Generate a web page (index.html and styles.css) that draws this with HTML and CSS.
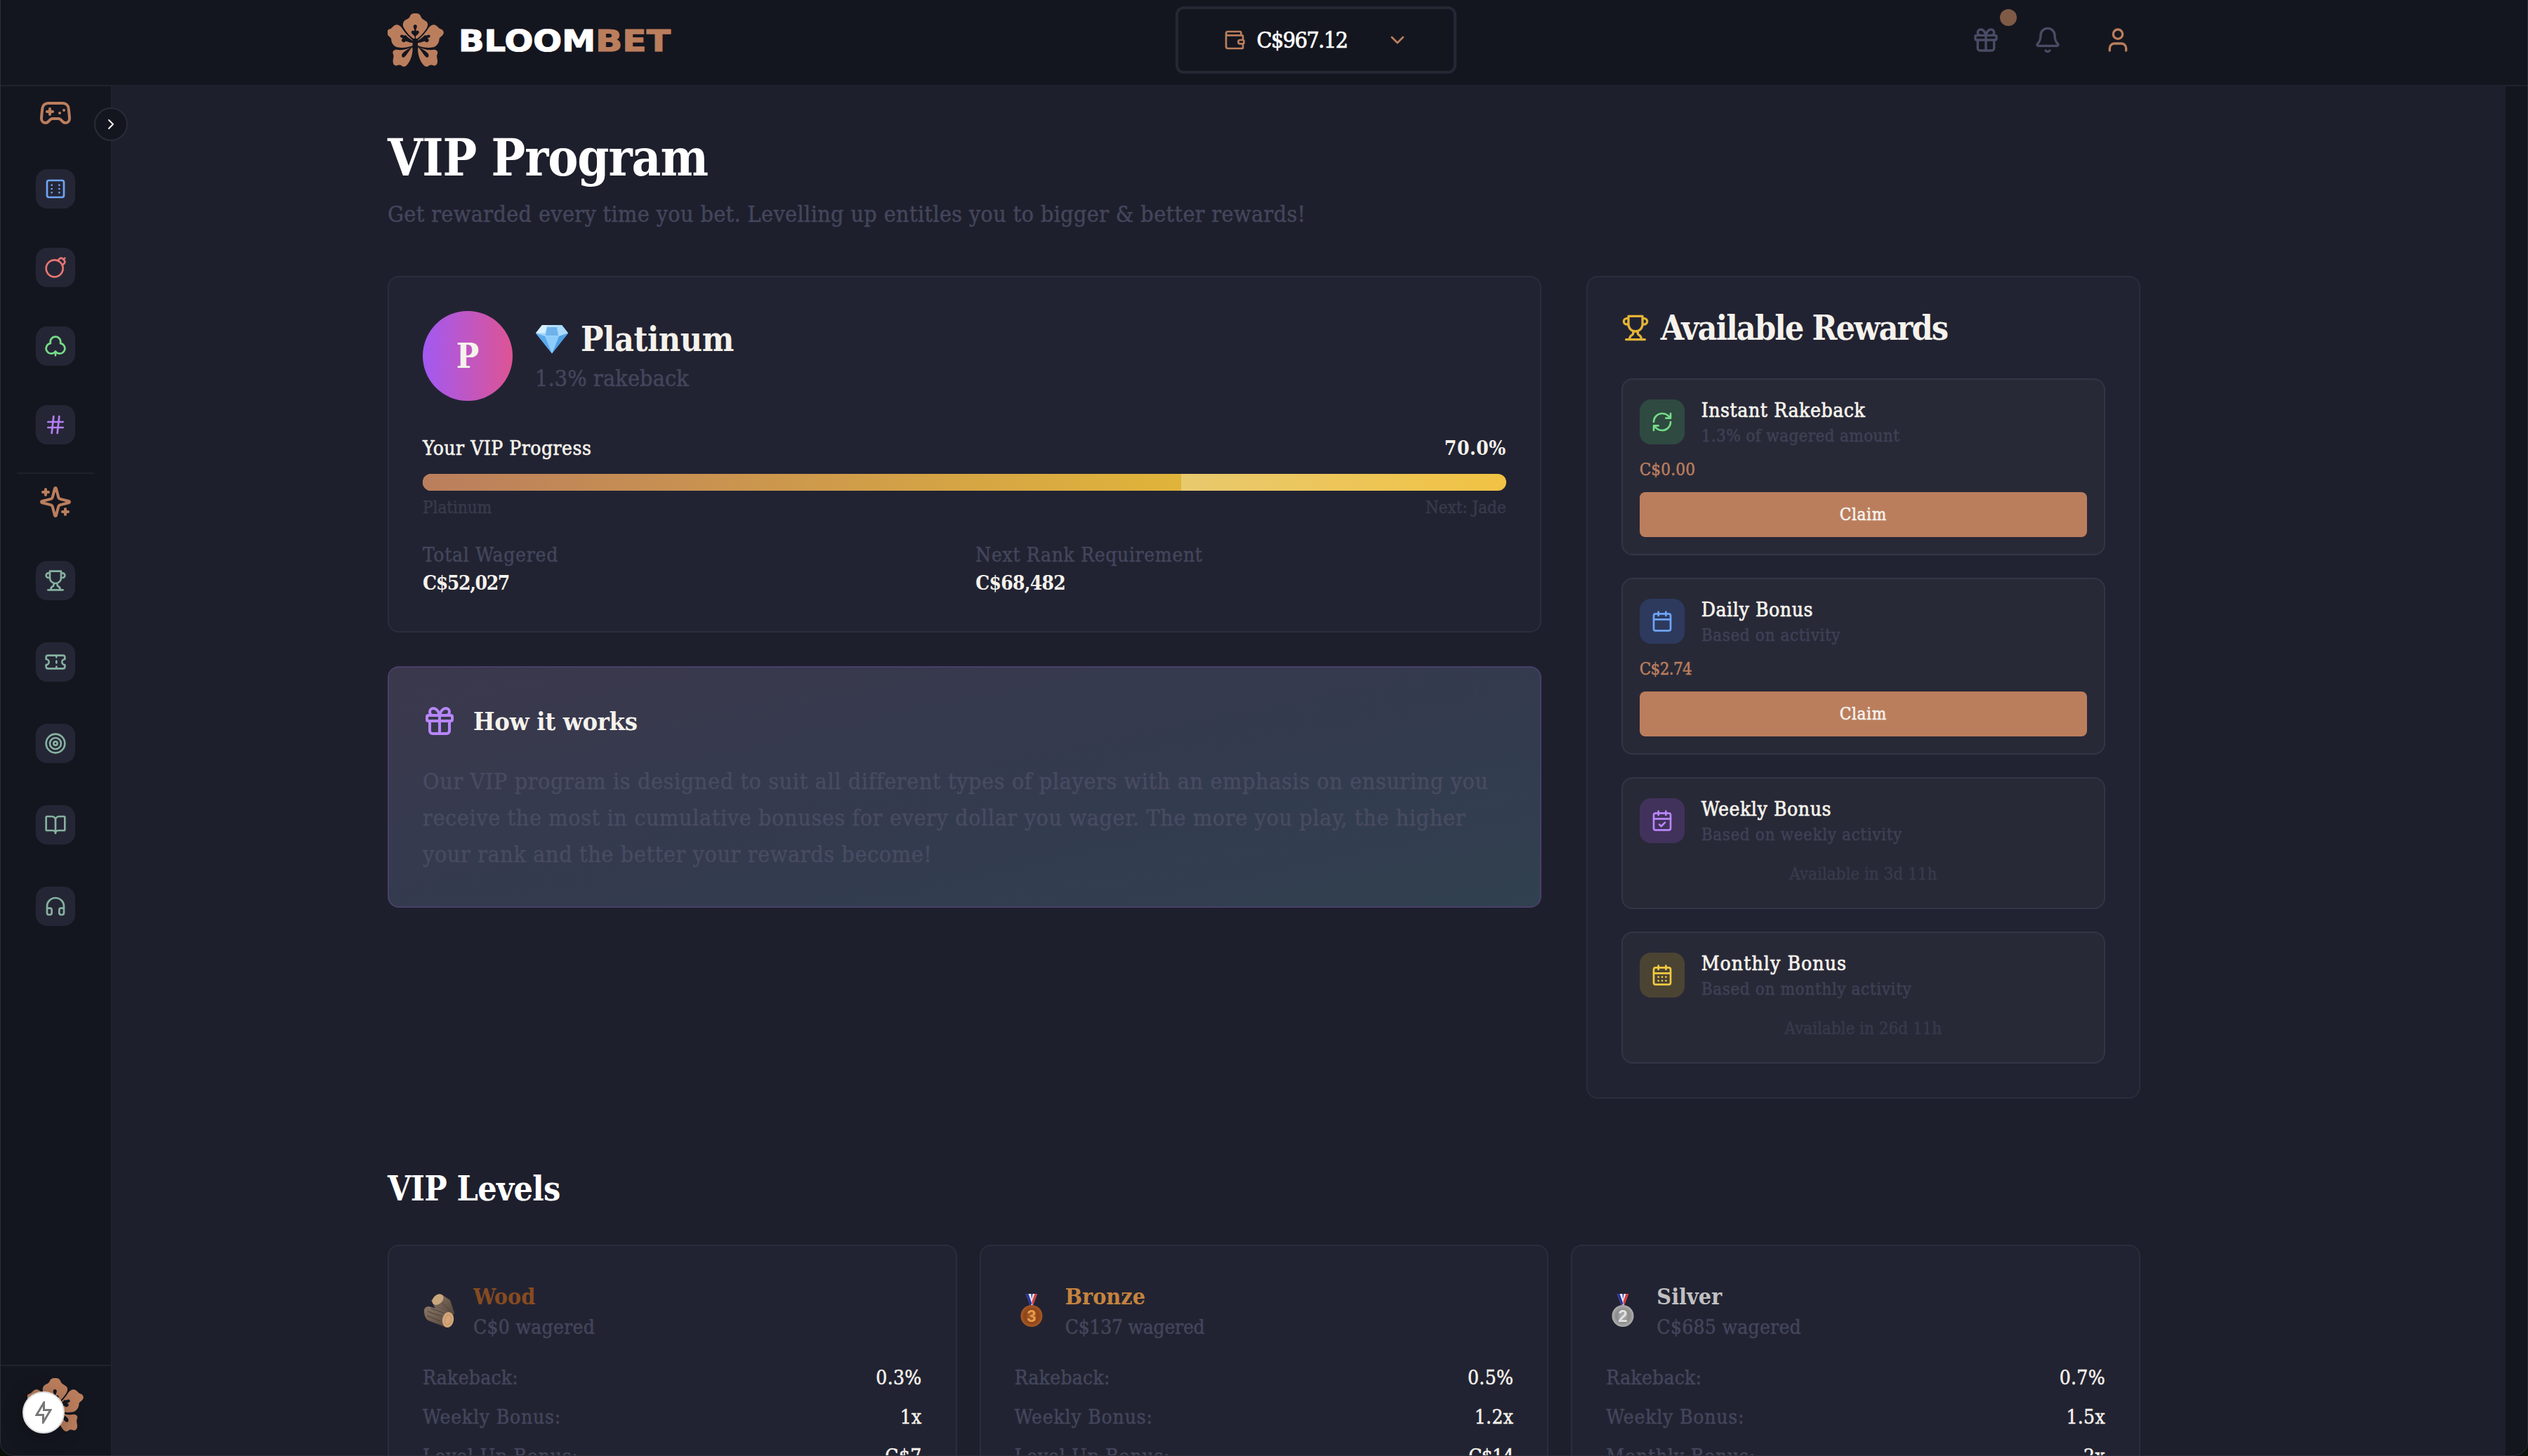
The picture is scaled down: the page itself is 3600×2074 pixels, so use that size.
FILE: index.html
```html
<!DOCTYPE html>
<html lang="en">
<head>
<meta charset="utf-8">
<title>BloomBet – VIP Program</title>
<link rel="stylesheet" href="styles.css">
</head>
<body>
<svg class="sprite" width="0" height="0" aria-hidden="true">
  <defs>
    <linearGradient id="gem" x1="0" y1="0" x2="0" y2="1"><stop offset="0" stop-color="#b9e4ff"/><stop offset="1" stop-color="#6db8f5"/></linearGradient>
    <linearGradient id="bark" x1="0" y1="0" x2="1" y2="1"><stop offset="0" stop-color="#8a7766"/><stop offset="1" stop-color="#50433a"/></linearGradient>
    <radialGradient id="bronze"><stop offset="0" stop-color="#b5652a"/><stop offset="0.6" stop-color="#8c4418"/><stop offset="1" stop-color="#a85a26"/></radialGradient>
    <radialGradient id="silver"><stop offset="0" stop-color="#b5b5b5"/><stop offset="0.6" stop-color="#8b8b8b"/><stop offset="1" stop-color="#b0b0b0"/></radialGradient>
    <symbol id="flower" viewBox="0 0 80 77">
      <path fill="#bb7e5d" d="M37 36C32 33 26 26 23 20.500C21 17 21.500 13 24 10.500C27 8 30 8 31.500 5C33 1 35 0 39.500 0C44 0 46 1 47.500 5C49 8.500 52 9 55 11.500C58 14 57.500 17 56 20.500C52 27 47 33 42 36Z"/>
      <g id="side">
        <path fill="#bb7e5d" d="M43 38C48 34 54 27.500 58.500 20.500C61.500 16.500 66 14.500 70 18C72.500 20 73 21.500 76 22.500C79 23.500 80.500 27 79.500 29C78 33 74 33.500 73.500 36.500C73.500 41 71 45.500 67 47.500C61 50 51 49 43 46Z"/>
        <path fill="#bb7e5d" d="M43.500 48C51 51.500 59 53 66 51.800C69.500 51.800 72 54 71 57.500C69 61 71 64 71 68C71 72 69.500 74.500 66 74.500C63 73.500 61 73 59.500 74C57 76.500 54 76.500 51.500 74C46 68 43.500 60 43 52Z"/>
        <path fill="#14161f" d="M40 40.500C46 37.500 49.500 34.500 52.500 31.500C54 30.500 55 32.500 56.500 31C59 29.500 61.500 31.500 60.500 33.500C59 35.500 57 34.500 57 36C59 37 59.500 38.500 57.500 40.500C56 42 53.500 41 53 39.500C49 41 45 42 40 42.500ZM42 47C47 49.500 55 53.500 58 58C59.500 61.500 57.500 63.500 55 62.500C51 60 49 53 42 47Z"/>
      </g>
      <use href="#side" transform="matrix(-1 0 0 1 78.600 0)"/>
      <path fill="#14161f" d="M38.600 44V33C37 30 33.800 29.500 33.800 27C33.800 24.500 36.500 23.800 38 25.500C38.500 22 36.700 21.500 36.700 18.500C36.700 15 41.800 15 41.800 18.500C41.800 21.500 40 22 40.500 25.500C42 23.800 44.700 24.500 44.700 27C44.700 29.500 41.500 30 40 33V44Z"/>
      <path fill="#14161f" d="M36.500 38H42.200L43 77H35.500Z"/>
      <path stroke="#14161f" stroke-width="1.200" fill="none" d="M39.300 39C46 35 53 28 58 19M39.300 39C32.600 35 25.600 28 20.600 19"/>
    </symbol>
    <symbol id="gift" viewBox="0 0 24 24"><rect x="3" y="8" width="18" height="4" rx="1"/><path d="M12 8v13M19 12v7a2 2 0 0 1-2 2H7a2 2 0 0 1-2-2v-7M7.500 8a2.500 2.500 0 0 1 0-5A4.800 8 0 0 1 12 8a4.800 8 0 0 1 4.500-5 2.500 2.500 0 0 1 0 5"/></symbol>
    <symbol id="trophy" viewBox="0 0 24 24"><path d="M6 9H4.500a2.500 2.500 0 0 1 0-5H6M18 9h1.500a2.500 2.500 0 0 0 0-5H18M4 22h16M10 14.660V17c0 .55-.47.98-.97 1.210C7.850 18.750 7 20.240 7 22M14 14.660V17c0 .55.47.98.97 1.210C16.150 18.750 17 20.240 17 22M18 2H6v7a6 6 0 0 0 12 0V2Z"/></symbol>
    <symbol id="medal" viewBox="0 0 48 48">
      <path fill="#e8e8f5" d="M16 0h16l-6 16h-4z"/><path fill="#2330a0" d="M16 0h3.500l5 14-1.500 2h-1z"/><path fill="#d83a3a" d="M32 0h-3.500l-4 11 .8 5h.7z"/><path fill="#2330a0" d="M23.500 0h2l-1.500 8z"/>
    </symbol>
  </defs>
</svg>

<div class="app">
  <header class="topbar">
    <div class="topbar-inner">
      <a class="brand">
        <svg width="80" height="77"><use href="#flower"/></svg>
        <svg class="wordmark" width="300" height="32" viewBox="0 0 300 32"><text x="-3" y="31.500" textLength="195" lengthAdjust="spacingAndGlyphs" fill="#fff" stroke="#fff">BLOOM</text><text x="192" y="31.500" textLength="107" lengthAdjust="spacingAndGlyphs" fill="#bb7e5d" stroke="#bb7e5d">BET</text></svg>
      </a>
      <button class="wallet">
        <svg class="ico" width="32" height="32" viewBox="0 0 24 24"><path d="M19 7V4a1 1 0 0 0-1-1H5a2 2 0 0 0 0 4h15a1 1 0 0 1 1 1v4h-3a2 2 0 0 0 0 4h3a1 1 0 0 0 1-1v-2a1 1 0 0 0-1-1M3 5v14a2 2 0 0 0 2 2h15a1 1 0 0 0 1-1v-4"/></svg>
        <span>C$967.12</span>
        <svg class="ico chev" width="32" height="32" viewBox="0 0 24 24"><path d="m6 9 6 6 6-6"/></svg>
      </button>
      <nav class="actions">
        <span class="gift-link"><svg class="ico" width="40" height="40"><use href="#gift"/></svg><i class="dot"></i></span>
        <svg class="ico" width="40" height="40" viewBox="0 0 24 24"><path d="M10.270 21a2 2 0 0 0 3.460 0M3.260 15.330A1 1 0 0 0 4 17h16a1 1 0 0 0 .74-1.670C19.410 13.960 18 12.500 18 8A6 6 0 0 0 6 8c0 4.500-1.410 5.960-2.740 7.330"/></svg>
        <svg class="ico user" width="40" height="40" viewBox="0 0 24 24"><path d="M19 21v-2a4 4 0 0 0-4-4H9a4 4 0 0 0-4 4v2"/><circle cx="12" cy="7" r="4"/></svg>
      </nav>
    </div>
  </header>

  <div class="shell">
    <aside class="sidebar">
      <div class="group games">
        <svg class="ico accent" width="48" height="48" viewBox="0 0 24 24"><path d="M6 11h4M8 9v4M15 12h.01M18 10h.01M17.320 5H6.680a4 4 0 0 0-3.978 3.590C2.604 9.416 2 14.456 2 16a3 3 0 0 0 3 3c1 0 1.500-.5 2-1l1.414-1.414A2 2 0 0 1 9.828 16h4.344a2 2 0 0 1 1.414.586L17 18c.5.5 1 1 2 1a3 3 0 0 0 3-3c0-1.545-.604-6.584-.685-7.258A4 4 0 0 0 17.320 5z"/></svg>
        <span class="tile blue"><svg class="ico" width="32" height="32" viewBox="0 0 24 24"><rect x="3" y="3" width="18" height="18" rx="2"/><path d="M16 8h.01M16 12h.01M16 16h.01M8 8h.01M8 12h.01M8 16h.01"/></svg></span>
        <span class="tile red"><svg class="ico" width="32" height="32" viewBox="0 0 24 24"><circle cx="11" cy="13" r="9"/><path d="M14.350 4.650 16.300 2.700a2.410 2.410 0 0 1 3.400 0l1.600 1.600a2.400 2.400 0 0 1 0 3.400l-1.950 1.950M22 2l-1.500 1.500"/></svg></span>
        <span class="tile green"><svg class="ico" width="32" height="32" viewBox="0 0 24 24"><path d="M17.280 9.050a5.500 5.500 0 1 0-10.560 0A5.500 5.500 0 1 0 12 17.660a5.500 5.500 0 1 0 5.280-8.600ZM12 17.660V22"/></svg></span>
        <span class="tile purple"><svg class="ico" width="32" height="32" viewBox="0 0 24 24"><path d="M4 9h16M4 15h16M10 3 8 21M16 3l-2 18"/></svg></span>
      </div>
      <hr>
      <div class="group more">
        <svg class="ico accent" width="48" height="48" viewBox="0 0 24 24"><path d="M9.937 15.500A2 2 0 0 0 8.500 14.063l-6.135-1.582a.5.5 0 0 1 0-.962L8.500 9.936A2 2 0 0 0 9.937 8.500l1.582-6.135a.5.5 0 0 1 .963 0L14.063 8.500A2 2 0 0 0 15.500 9.937l6.135 1.581a.5.5 0 0 1 0 .964L15.500 14.063a2 2 0 0 0-1.437 1.437l-1.582 6.135a.5.5 0 0 1-.963 0zM19 17v4M21 19h-4M5 3v4M7 5H3"/></svg>
        <span class="tile"><svg class="ico" width="32" height="32"><use href="#trophy"/></svg></span>
        <span class="tile"><svg class="ico" width="32" height="32" viewBox="0 0 24 24"><path d="M2 9a3 3 0 0 1 0 6v2a2 2 0 0 0 2 2h16a2 2 0 0 0 2-2v-2a3 3 0 0 1 0-6V7a2 2 0 0 0-2-2H4a2 2 0 0 0-2 2ZM13 5v2M13 17v2M13 11v2"/></svg></span>
        <span class="tile"><svg class="ico" width="32" height="32" viewBox="0 0 24 24"><circle cx="12" cy="12" r="10"/><circle cx="12" cy="12" r="6"/><circle cx="12" cy="12" r="2"/></svg></span>
        <span class="tile"><svg class="ico" width="32" height="32" viewBox="0 0 24 24"><path d="M12 7v14M3 18a1 1 0 0 1-1-1V4a1 1 0 0 1 1-1h5a4 4 0 0 1 4 4 4 4 0 0 1 4-4h5a1 1 0 0 1 1 1v13a1 1 0 0 1-1 1h-6a3 3 0 0 0-3 3 3 3 0 0 0-3-3z"/></svg></span>
        <span class="tile"><svg class="ico" width="32" height="32" viewBox="0 0 24 24"><path d="M3 14h3a2 2 0 0 1 2 2v3a2 2 0 0 1-2 2H5a2 2 0 0 1-2-2v-7a9 9 0 0 1 18 0v7a2 2 0 0 1-2 2h-1a2 2 0 0 1-2-2v-3a2 2 0 0 1 2-2h3"/></svg></span>
      </div>
      <div class="side-foot">
        <svg width="80" height="77"><use href="#flower"/></svg>
        <button class="bolt"><svg width="24" height="32" viewBox="0 0 24 32" fill="none" stroke="#777" stroke-width="3"><path d="M12.500 2 2 19.500h9.500V30L22 12.500h-9.500Z"/></svg></button>
      </div>
      <button class="toggle"><svg class="ico" width="24" height="24" viewBox="0 0 24 24"><path d="m9 6 6 6-6 6"/></svg></button>
    </aside>

    <main class="content">
      <h1>VIP Program</h1>
      <p class="lead">Get rewarded every time you bet. Levelling up entitles you to bigger &amp; better rewards!</p>

      <div class="overview">
        <div class="left">
          <section class="card status">
            <div class="rank">
              <div class="avatar">P</div>
              <div>
                <h2 class="rank-name"><svg width="48" height="42" viewBox="0 0 48 42"><path fill="url(#gem)" d="M10 1h28l9 11.500L24 41.500 1 12.500Z"/><path fill="#d6f0ff" d="M10 1h7l-3 11.500H1Z"/><path fill="#6fb2ea" d="M17 4h14l2 12H15Z"/><path fill="#a9dbfc" d="M31 1h7l9 11.500-13 4Z"/><path fill="#4f9fe6" d="M34 17 47 12.500 24 41.500Z"/><path fill="#8dcdfb" d="M14 17h20L24 41.500Z"/><path fill="#5aa9ee" d="m1 12.500 13 4.500 10 24.500Z"/></svg>Platinum</h2>
                <p class="rank-rate">1.3% rakeback</p>
              </div>
            </div>
            <div class="progress-head"><span>Your VIP Progress</span><b>70.0%</b></div>
            <div class="bar"><div class="fill" style="width:70%"></div></div>
            <div class="progress-foot"><span>Platinum</span><span>Next: Jade</span></div>
            <div class="stats">
              <div><p>Total Wagered</p><b>C$52,027</b></div>
              <div><p class="req">Next Rank Requirement</p><b class="req-value">C$68,482</b></div>
            </div>
          </section>
          <section class="card how">
            <h3><svg class="ico" width="48" height="48"><use href="#gift"/></svg>How it works</h3>
            <p>Our VIP program is designed to suit all different types of players with an emphasis on ensuring you<br>receive the most in cumulative bonuses for every dollar you wager. The more you play, the higher<br>your rank and the better your rewards become!</p>
          </section>
        </div>

        <section class="card rewards">
          <h2><svg class="ico" width="40" height="40"><use href="#trophy"/></svg>Available Rewards</h2>
          <article class="reward">
            <div class="reward-head"><span class="badge b-green"><svg class="ico" width="32" height="32" viewBox="0 0 24 24"><path d="M3 12a9 9 0 0 1 9-9 9.750 9.750 0 0 1 6.740 2.740L21 8M21 3v5h-5M21 12a9 9 0 0 1-9 9 9.750 9.750 0 0 1-6.740-2.740L3 16M8 16H3v5"/></svg></span><div><h4>Instant Rakeback</h4><p>1.3% of wagered amount</p></div></div>
            <div class="amount">C$0.00</div>
            <button class="claim">Claim</button>
          </article>
          <article class="reward">
            <div class="reward-head"><span class="badge b-blue"><svg class="ico" width="32" height="32" viewBox="0 0 24 24"><path d="M8 2v4M16 2v4M3 10h18"/><rect x="3" y="4" width="18" height="18" rx="2"/></svg></span><div><h4>Daily Bonus</h4><p class="basis">Based on activity</p></div></div>
            <div class="amount tight">C$2.74</div>
            <button class="claim">Claim</button>
          </article>
          <article class="reward">
            <div class="reward-head"><span class="badge b-purple"><svg class="ico" width="32" height="32" viewBox="0 0 24 24"><path d="M8 2v4M16 2v4M3 10h18m-12 6 2 2 4-4"/><rect x="3" y="4" width="18" height="18" rx="2"/></svg></span><div><h4>Weekly Bonus</h4><p class="basis">Based on weekly activity</p></div></div>
            <div class="wait">Available in 3d 11h</div>
          </article>
          <article class="reward">
            <div class="reward-head"><span class="badge b-yellow"><svg class="ico" width="32" height="32" viewBox="0 0 24 24"><path d="M8 2v4M16 2v4M3 10h18M8 14h.01M12 14h.01M16 14h.01M8 18h.01M12 18h.01M16 18h.01"/><rect x="3" y="4" width="18" height="18" rx="2"/></svg></span><div><h4 class="wide">Monthly Bonus</h4><p class="basis">Based on monthly activity</p></div></div>
            <div class="wait">Available in 26d 11h</div>
          </article>
        </section>
      </div>

      <h2 class="levels-title">VIP Levels</h2>
      <div class="levels">
        <section class="card level">
          <div class="level-head">
            <svg width="48" height="48" viewBox="0 0 48 48"><path fill="url(#bark)" d="M12 9 27 1 39 9l6 18-3 6-24-12Z"/><ellipse cx="21.500" cy="8" rx="6.500" ry="9" transform="rotate(48 21.500 8)" fill="#c9a77c"/><path fill="url(#bark)" d="M2 24c0-4 3-6 7-6l29 8c6 2 7 20-4 22L8 38c-5-3-6-9-6-14z"/><ellipse cx="36" cy="37" rx="8" ry="11" transform="rotate(10 36 37)" fill="#d3a67a"/><ellipse cx="36" cy="37" rx="4.500" ry="7" transform="rotate(10 36 37)" fill="none" stroke="#c08e62"/><path stroke="#4d4037" fill="none" d="M7 25l20 7M6 31l19 8M28 13l12 12M12 21l18 6"/></svg>
            <div><h3 class="wood">Wood</h3><p>C$0 wagered</p></div>
          </div>
          <dl><div><dt>Rakeback:</dt><dd>0.3%</dd></div><div><dt class="wide">Weekly Bonus:</dt><dd>1x</dd></div><div><dt class="wide">Level Up Bonus:</dt><dd>C$7</dd></div></dl>
        </section>
        <section class="card level">
          <div class="level-head">
            <svg width="48" height="48" viewBox="0 0 48 48"><use href="#medal"/><circle cx="24" cy="31.500" r="15.500" fill="url(#bronze)"/><text class="medal-num" x="24" y="40" fill="#e79a4b">3</text></svg>
            <div><h3 class="bronze">Bronze</h3><p class="narrow">C$137 wagered</p></div>
          </div>
          <dl><div><dt>Rakeback:</dt><dd>0.5%</dd></div><div><dt class="wide">Weekly Bonus:</dt><dd>1.2x</dd></div><div><dt class="wide">Level Up Bonus:</dt><dd class="narrow">C$14</dd></div></dl>
        </section>
        <section class="card level">
          <div class="level-head">
            <svg width="48" height="48" viewBox="0 0 48 48"><use href="#medal"/><circle cx="24" cy="31.500" r="15.500" fill="url(#silver)"/><text class="medal-num" x="24" y="40" fill="#e2e2e2">2</text></svg>
            <div><h3 class="silver">Silver</h3><p>C$685 wagered</p></div>
          </div>
          <dl><div><dt>Rakeback:</dt><dd>0.7%</dd></div><div><dt class="wide">Weekly Bonus:</dt><dd>1.5x</dd></div><div><dt class="wide">Monthly Bonus:</dt><dd>2x</dd></div></dl>
        </section>
      </div>
    </main>
    <div class="gutter"></div>
  </div>
</div>
</body>
</html>
```
FILE: styles.css
```css
:root {
  --ink: #14161f;
  --page: #1e1f2c;
  --card: #222332;
  --line: #2b2d3c;
  --accent: #bb7e5d;
  --muted: #43465c;
  --faint: #373a4c;
  --cream: #f5f2ec;
}

* { box-sizing: border-box; margin: 0; padding: 0; }
html { background: #0a1309; }
body {
  font-family: "DejaVu Serif Condensed", "DejaVu Serif", serif;
  font-stretch: condensed;
  font-size: 28px;
  line-height: 40px;
  color: var(--cream);
  overflow: hidden;
  height: 2074px;
}
p, dt, dd, .wait, .progress-foot { -webkit-text-stroke: 0.5px currentColor; }
button { font: inherit; color: inherit; border: 0; background: none; }
svg { display: block; flex: none; }
.sprite { position: absolute; }
.ico { fill: none; stroke: currentColor; stroke-width: 2; stroke-linecap: round; stroke-linejoin: round; }
.accent { color: var(--accent); }

.app {
  position: relative;
  height: 2074px;
  background: var(--page);
  border-radius: 0 0 20px 20px;
  overflow: hidden;
  display: flex;
  flex-direction: column;
}
.app::after {
  content: "";
  position: absolute;
  inset: -4px 0 0;
  border: 1px solid #2c2e38;
  border-radius: 0 0 20px 20px;
}

/* top bar */
.topbar { height: 123px; flex: none; background: var(--ink); border-bottom: 2px solid #20222e; }
.topbar-inner { width: 2496px; height: 114px; margin-left: 552px; display: flex; align-items: center; }
.brand { display: flex; align-items: center; gap: 24px; }
.wordmark { overflow: visible; }
.wordmark text { font: 700 43px "DejaVu Sans", sans-serif; font-stretch: normal; stroke-width: 1.2px; }
.wallet {
  width: 400px; height: 96px; margin-left: 718px;
  border: 4px solid #252735; border-radius: 12px;
  display: flex; align-items: center; justify-content: center;
  font-size: 32px; font-weight: 400; letter-spacing: -0.047em; color: #fff;
}
.wallet .ico { color: var(--accent); }
.wallet span { margin: 0 55px 0 15px; -webkit-text-stroke: 0.7px #fff; }
.actions { margin-left: auto; padding-right: 12px; display: flex; align-items: center; gap: 48px; color: #494c66; }
.actions .user { color: var(--accent); margin-left: 12px; }
.gift-link { position: relative; }
.dot { position: absolute; left: 40px; top: -24px; width: 24px; height: 24px; border-radius: 50%; background: #7f5a47; }

/* sidebar */
.shell { flex: 1; display: flex; min-height: 0; }
.sidebar {
  position: relative; flex: none; width: 160px;
  background: var(--ink); border-right: 2px solid #20222e;
  display: flex; flex-direction: column;
}
.group { display: flex; flex-direction: column; align-items: center; }
.games { gap: 56px; padding-top: 14px; }
.more { gap: 60px; }
.sidebar hr { border: 0; height: 2px; background: #1d1f2b; margin: 40px 24px 16px; }
.tile {
  width: 56px; height: 56px; border-radius: 16px; background: #252635; color: #86b2a1;
  display: flex; align-items: center; justify-content: center;
}
.tile.blue { color: #6fa5f7; }
.tile.red { color: #e97673; }
.tile.green { color: #76dc89; }
.tile.purple { color: #b47ff5; }
.side-foot { margin-top: auto; height: 130px; padding: 17px 0 0 39px; border-top: 2px solid #20222e; position: relative; }
.bolt {
  position: absolute; left: 32px; top: 36px; width: 60px; height: 60px; border-radius: 50%;
  background: #fff; border: 2px solid #dcdcdc; box-shadow: 0 4px 30px rgba(0, 0, 0, .3);
  display: flex; align-items: center; justify-content: center;
}
.toggle {
  position: absolute; left: 134px; top: 30px; width: 48px; height: 48px; border-radius: 50%;
  background: var(--ink); border: 2px solid #2a2b3a;
  display: flex; align-items: center; justify-content: center; z-index: 2;
}
.gutter { flex: none; width: 32px; background: #14161e; }

/* page */
.content { flex: 1; min-width: 0; padding: 62px 520px 0 392px; }
h1 { font-size: 72px; line-height: 80px; letter-spacing: -0.015em; color: #fff; }
.lead { margin: 16px 0 64px; font-size: 32px; line-height: 48px; letter-spacing: 0.0115em; color: var(--muted); white-space: nowrap; }
.card { background: var(--card); border: 2px solid var(--line); border-radius: 16px; padding: 48px; }
.overview { display: grid; grid-template-columns: repeat(3, 1fr); gap: 64px; align-items: start; }
.left { grid-column: span 2; display: flex; flex-direction: column; gap: 48px; }

.rank { display: flex; align-items: center; gap: 32px; }
.avatar {
  width: 128px; height: 128px; border-radius: 50%; background: linear-gradient(90deg, #a259f2, #dd5494);
  display: flex; align-items: center; justify-content: center; font-size: 48px; font-weight: 700;
}
.rank-name { display: flex; align-items: center; gap: 17px; font-size: 48px; line-height: 64px; letter-spacing: -0.01em; }
.rank-rate { font-size: 32px; line-height: 48px; letter-spacing: 0.005em; color: var(--muted); }
.progress-head, .progress-foot { display: flex; justify-content: space-between; }
.progress-head { margin: 48px 0 16px; letter-spacing: 0.018em; }
.progress-head span { -webkit-text-stroke: 0.6px var(--cream); }
.bar { height: 24px; border-radius: 12px; overflow: hidden; background: linear-gradient(90deg, #e8c96e 70%, #f1c243); }
.fill { height: 100%; background: linear-gradient(90deg, #bb7e5d, #e0b43a); }
.progress-foot { margin-top: 8px; font-size: 24px; line-height: 32px; color: var(--faint); }
.stats { margin-top: 32px; display: grid; grid-template-columns: 1fr 1fr; gap: 32px; }
.stats p { color: var(--muted); letter-spacing: 0.026em; }
.stats .req { letter-spacing: 0.023em; }
.stats b { display: block; letter-spacing: -0.049em; }
.stats .req-value { letter-spacing: -0.028em; }

.how { background: linear-gradient(to bottom right, #3b384c, #363a4e 35%, #333b4f 60%, #31414f); border-color: #493f6a; }
.how h3 { display: flex; align-items: center; gap: 24px; height: 56px; font-size: 36px; letter-spacing: -0.008em; }
.how h3 svg { color: #b886fb; }
.how p { margin-top: 32px; font-size: 32px; line-height: 52px; letter-spacing: 0.0193em; color: #484b62; white-space: nowrap; }

/* rewards */
.rewards { display: flex; flex-direction: column; gap: 32px; }
.rewards h2 { display: flex; align-items: center; gap: 16px; height: 48px; margin-bottom: 16px; font-size: 48px; letter-spacing: -0.039em; white-space: nowrap; }
.rewards h2 svg { color: #e3b437; }
.reward { background: #282937; border: 2px solid #333547; border-radius: 16px; padding: 24px; display: flex; flex-direction: column; gap: 16px; }
.reward-head { display: flex; align-items: center; gap: 24px; }
.reward h4 { font-weight: 400; letter-spacing: 0.022em; -webkit-text-stroke: 0.7px var(--cream); }
.reward h4.wide { letter-spacing: 0.04em; }
.reward p { font-size: 24px; line-height: 32px; letter-spacing: 0.016em; color: #3e4156; }
.reward p.basis { letter-spacing: 0.027em; }
.badge { width: 64px; height: 64px; border-radius: 16px; display: flex; align-items: center; justify-content: center; }
.b-green { background: #2f4a40; color: #76dc89; }
.b-blue { background: #2d3a5e; color: #6fa5f7; }
.b-purple { background: #41325b; color: #b886fb; }
.b-yellow { background: #4b4433; color: #f2ca40; }
.amount { font-size: 24px; line-height: 32px; letter-spacing: 0.008em; color: var(--accent); -webkit-text-stroke: 0.5px var(--accent); }
.amount.tight { letter-spacing: -0.026em; }
.claim { height: 64px; border-radius: 8px; background: var(--accent); font-size: 24px; letter-spacing: 0.028em; -webkit-text-stroke: 0.6px var(--cream); }
.wait { padding: 8px; text-align: center; font-size: 24px; line-height: 32px; color: var(--faint); }

/* levels */
.levels-title { margin: 96px 0 48px; font-size: 48px; line-height: 64px; letter-spacing: -0.014em; color: #fff; }
.levels { display: grid; grid-template-columns: repeat(3, 1fr); gap: 32px; }
.level-head { display: flex; align-items: center; gap: 24px; }
.level-head h3 { font-size: 32px; line-height: 48px; letter-spacing: 0; }
.level-head p { color: var(--muted); letter-spacing: 0.01em; }
.level-head p.narrow { letter-spacing: -0.009em; }
.wood { color: #874b20; }
.bronze { color: #c4833f; }
.silver { color: #c0c0c0; }
.medal-num { font: 700 24px "Liberation Sans", sans-serif; text-anchor: middle; }
.level dl { margin-top: 32px; display: flex; flex-direction: column; gap: 16px; }
.level dl div { display: flex; justify-content: space-between; }
.level dt { color: var(--muted); letter-spacing: 0.009em; }
.level dt.wide { letter-spacing: 0.029em; }
.level dd { letter-spacing: 0.012em; }
.level dd.narrow { letter-spacing: -0.03em; }
```
